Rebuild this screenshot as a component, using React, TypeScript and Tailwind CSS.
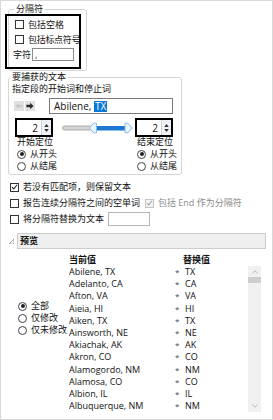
import { clsx } from "clsx";

function CheckBox({ checked = false, disabled = false }: { checked?: boolean; disabled?: boolean }) {
  return (
    <span
      className={clsx(
        "flex h-[9px] w-[9px] shrink-0 items-center justify-center border",
        disabled ? "border-[#c4c4c4] bg-[#f3f3f3]" : "border-[#333] bg-white"
      )}
    >
      {checked && (
        <svg viewBox="0 0 9 9" className="h-[8px] w-[8px]">
          <path d="M1.3 4.6 L3.6 6.9 L7.8 1.6" fill="none" stroke={disabled ? "#a5a5a5" : "#222"} strokeWidth="1.3" />
        </svg>
      )}
    </span>
  );
}

function Radio({ checked = false }: { checked?: boolean }) {
  return (
    <span className="flex h-[9px] w-[9px] shrink-0 items-center justify-center rounded-full border border-[#444] bg-white">
      {checked && <span className="h-[4px] w-[4px] rounded-full bg-[#222]" />}
    </span>
  );
}

function ArrowButton({ dir, disabled }: { dir: "left" | "right"; disabled?: boolean }) {
  return (
    <span className="flex h-[10px] w-[10px] items-center justify-center bg-[#e1e1e1]">
      <svg viewBox="0 0 9 9" className={clsx("h-[8px] w-[8px]", dir === "right" && "rotate-180")}>
        <path d="M0.5 4.5 L4.3 0.8 L4.3 3 L8.5 3 L8.5 6 L4.3 6 L4.3 8.2 Z" fill={disabled ? "#c9c9c9" : "#2b2b2b"} />
      </svg>
    </span>
  );
}

function SpinBox() {
  return (
    <div className="flex h-[19px] w-[38px] shrink-0 border-2 border-black">
      <div className="flex flex-1 items-center justify-end bg-white pr-[3px] text-[10px]">2</div>
      <div className="flex w-[10px] flex-col items-center justify-center gap-[2px] border-l border-[#d0d0d0] bg-[#eef2f7]">
        <svg viewBox="0 0 6 4" className="h-[3px] w-[5px]">
          <path d="M0 4 L3 0 L6 4 Z" fill="#333" />
        </svg>
        <svg viewBox="0 0 6 4" className="h-[3px] w-[5px]">
          <path d="M0 0 L3 4 L6 0 Z" fill="#333" />
        </svg>
      </div>
    </div>
  );
}

function Slider() {
  return (
    <svg viewBox="0 0 71 12" className="h-[12px] w-[71px] shrink-0">
      <rect x="0.5" y="4" width="29" height="4" rx="2" fill="#d6d6d6" stroke="#9b9b9b" strokeWidth="0.8" />
      <rect x="32" y="4" width="32" height="4.5" fill="#1e78d2" />
      <path d="M27.5 6 L31.5 1.2 L34.5 1.2 L34.5 10.8 L31.5 10.8 Z" fill="#eaf2fb" stroke="#8dbbe8" strokeWidth="1" />
      <path d="M70 6 L66 1.2 L63 1.2 L63 10.8 L66 10.8 Z" fill="#eaf2fb" stroke="#8dbbe8" strokeWidth="1" />
    </svg>
  );
}

const ROWS: [string, string][] = [
  ["Abilene, TX", "TX"],
  ["Adelanto, CA", "CA"],
  ["Afton, VA", "VA"],
  ["Aieia, HI", "HI"],
  ["Aiken, TX", "TX"],
  ["Ainsworth, NE", "NE"],
  ["Akiachak, AK", "AK"],
  ["Akron, CO", "CO"],
  ["Alamogordo, NM", "NM"],
  ["Alamosa, CO", "CO"],
  ["Albion, IL", "IL"],
  ["Albuquerque, NM", "NM"],
];

export default function App() {
  return (
    <div className="relative h-[420px] w-[273px] overflow-hidden bg-white font-['Open_Sans','Noto_Sans_CJK_SC',sans-serif] text-[9px] leading-[12px] text-[#111]">
      {/* 分隔符 */}
      <fieldset className="ml-[8px] mt-[3px] w-[79px] rounded-[3px] border border-[#d5d5d5] pb-[1px]">
        <legend className="ml-[5px] px-[2px] leading-[12px]">分隔符</legend>
        <div className="-ml-[4px] -mt-[1px] flex h-[55px] w-[76px] flex-col border-2 border-black pt-[1px]">
          <div className="flex h-[15px] items-center gap-[4px] pl-[8px]">
            <CheckBox />
            <span>包括空格</span>
          </div>
          <div className="flex h-[15px] items-center gap-[4px] whitespace-nowrap pl-[8px]">
            <CheckBox />
            <span className="tracking-[-0.3px]">包括标点符号</span>
          </div>
          <div className="flex h-[15px] items-center gap-[1px] pl-[6px]">
            <span>字符</span>
            <span className="flex h-[13px] w-[42px] items-center border border-[#8a8a8a] bg-white pl-[2px]">,</span>
          </div>
        </div>
      </fieldset>

      {/* 要捕获的文本 */}
      <fieldset className="ml-[8px] w-[174px] rounded-[3px] border border-[#d5d5d5] pb-[2px]">
        <legend className="ml-[1px] px-[2px] leading-[12px]">要捕获的文本</legend>
        <div className="pl-[3px]">指定段的开始词和停止词</div>
        <div className="mt-[3px] flex h-[16px] items-center pl-[5px]">
          <div className="flex gap-[1px]">
            <ArrowButton dir="left" disabled />
            <ArrowButton dir="right" />
          </div>
          <div className="ml-[14px] flex h-[16px] w-[124px] items-center border border-[#7a7a7a] bg-white pl-[4px] text-[10px]">
            <span>Abilene,&nbsp;</span>
            <span className="bg-[#0a78d7] px-[1px] leading-[11px] text-white">TX</span>
          </div>
        </div>
        <div className="mt-[4px] flex items-center pl-[6px]">
          <SpinBox />
          <div className="ml-[9px]">
            <Slider />
          </div>
          <div className="ml-[2px]">
            <SpinBox />
          </div>
        </div>
        <div className="-mt-[1px] flex">
          <div className="flex w-[128px] flex-col pl-[8px]">
            <span>开始定位</span>
            <div className="flex h-[12px] items-center gap-[4px]">
              <Radio checked />
              <span>从开头</span>
            </div>
            <div className="flex h-[12px] items-center gap-[4px]">
              <Radio />
              <span>从结尾</span>
            </div>
          </div>
          <div className="flex flex-col">
            <span>结束定位</span>
            <div className="flex h-[12px] items-center gap-[4px]">
              <Radio checked />
              <span>从开头</span>
            </div>
            <div className="flex h-[12px] items-center gap-[4px]">
              <Radio />
              <span>从结尾</span>
            </div>
          </div>
        </div>
      </fieldset>

      {/* options */}
      <div className="mt-[4px] flex flex-col pl-[10px]">
        <div className="flex h-[16px] items-center gap-[4px]">
          <CheckBox checked />
          <span>若没有匹配项，则保留文本</span>
        </div>
        <div className="flex h-[16px] items-center gap-[4px] whitespace-nowrap">
          <CheckBox />
          <span>报告连续分隔符之间的空单词</span>
          <span className="ml-[1px]">
            <CheckBox checked disabled />
          </span>
          <span className="text-[#8a8a8a]">包括 End 作为分隔符</span>
        </div>
        <div className="flex h-[16px] items-center gap-[4px]">
          <CheckBox />
          <span>将分隔符替换为文本</span>
          <span className="h-[14px] w-[42px] border border-[#b5b5b5] bg-white" />
        </div>
      </div>

      {/* 预览 */}
      <div className="mt-[6px] flex items-center pl-[9px]">
        <svg viewBox="0 0 6 6" className="h-[5px] w-[5px]">
          <path d="M6 0 L6 6 L0 6 Z" fill="none" stroke="#8a8a8a" strokeWidth="0.9" />
        </svg>
        <div className="ml-[3px] flex h-[16px] w-[249px] items-center border border-[#cdcdcd] bg-[#efefef] pl-[2px] font-bold">
          预览
        </div>
      </div>
      <div className="mt-[5px] flex">
        <div className="flex w-[69px] flex-col pl-[18px] pt-[46px]">
          <div className="flex h-[12px] items-center gap-[4px]">
            <Radio checked />
            <span>全部</span>
          </div>
          <div className="flex h-[12px] items-center gap-[4px]">
            <Radio />
            <span>仅修改</span>
          </div>
          <div className="flex h-[12px] items-center gap-[4px]">
            <Radio />
            <span>仅未修改</span>
          </div>
        </div>
        <div className="flex flex-col">
          <div className="flex h-[12px] font-bold">
            <span className="w-[114px]">当前值</span>
            <span>替换值</span>
          </div>
          <div className="flex">
            <div className="flex w-[179px] flex-col">
              {ROWS.map(([cur, rep]) => (
                <div key={cur} className="flex h-[12.2px] items-center whitespace-nowrap">
                  <span className="w-[106px] overflow-hidden">{cur}</span>
                  <span className="w-[10px] text-[8px] text-[#444]">*</span>
                  <span>{rep}</span>
                </div>
              ))}
            </div>
            <div className="flex h-[146px] w-[13px] flex-col items-center bg-[#f0f0f0]">
              <svg viewBox="0 0 8 5" className="mt-[4px] h-[4px] w-[6px]">
                <path d="M0.5 4.5 L4 1 L7.5 4.5" fill="none" stroke="#a8a8a8" strokeWidth="1" />
              </svg>
              <div className="mt-[3px] h-[6px] w-[13px] bg-[#cdcdcd]" />
              <div className="flex-1" />
              <svg viewBox="0 0 8 5" className="mb-[4px] h-[4px] w-[6px]">
                <path d="M0.5 0.5 L4 4 L7.5 0.5" fill="none" stroke="#a8a8a8" strokeWidth="1" />
              </svg>
            </div>
          </div>
        </div>
      </div>
      <div className="pointer-events-none absolute inset-0 border border-[#d9d9d9]" />
    </div>
  );
}
